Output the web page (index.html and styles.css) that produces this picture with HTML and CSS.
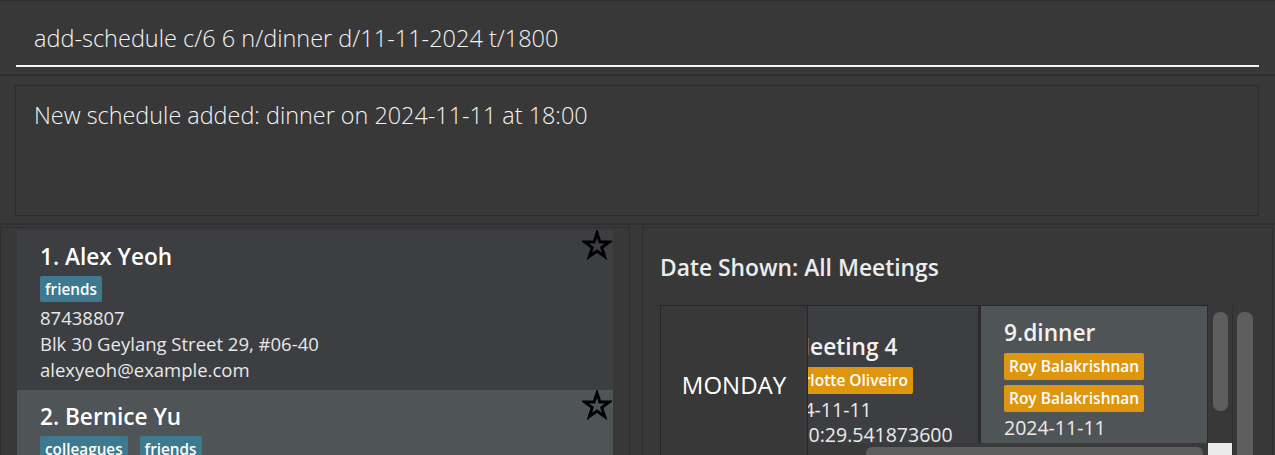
FILE: index.html
```html
<!DOCTYPE html>
<html lang="en">
<head>
<meta charset="utf-8">
<title>Address Book</title>
<link rel="stylesheet" href="styles.css">
</head>
<body>
<div class="app">
  <div class="command-bar">
    <div class="command-field">add-schedule c/6 6 n/dinner d/11-11-2024 t/1800</div>
  </div>
  <div class="result-bar">
    <div class="result-box">New schedule added: dinner on 2024-11-11 at 18:00</div>
  </div>
  <div class="main">
    <div class="panel left-panel">
      <div class="person-list">
        <div class="person-card">
          <div class="person-name">1. Alex Yeoh</div>
          <div class="tags"><span class="tag">friends</span></div>
          <div class="person-line">87438807</div>
          <div class="person-line">Blk 30 Geylang Street 29, #06-40</div>
          <div class="person-line">alexyeoh@example.com</div>
          <svg class="star" viewBox="0 0 30 30" width="30" height="30"><polygon points="15,3 17.92,11.98 27.36,11.98 19.73,17.54 22.64,26.52 15,20.97 7.36,26.52 10.27,17.54 2.64,11.98 12.08,11.98" fill="none" stroke="#000" stroke-width="2.9" stroke-linejoin="miter"/></svg>
        </div>
        <div class="person-card selected">
          <div class="person-name">2. Bernice Yu</div>
          <div class="tags"><span class="tag">colleagues</span><span class="tag">friends</span></div>
          <div class="person-line">99272758</div>
          <div class="person-line">Blk 30 Lorong 3 Serangoon Gardens, #07-18</div>
          <svg class="star" viewBox="0 0 30 30" width="30" height="30"><polygon points="15,3 17.92,11.98 27.36,11.98 19.73,17.54 22.64,26.52 15,20.97 7.36,26.52 10.27,17.54 2.64,11.98 12.08,11.98" fill="none" stroke="#000" stroke-width="2.9" stroke-linejoin="miter"/></svg>
        </div>
      </div>
    </div>
    <div class="panel right-panel">
      <div class="date-title">Date Shown: All Meetings</div>
      <div class="calendar-area">
        <div class="calendar">
          <div class="day-cell">MONDAY</div>
          <div class="meetings-view">
            <div class="meetings-track">
              <div class="meeting-card">
                <div class="meeting-name">8.Meeting 4</div>
                <div class="meeting-tags"><span class="mtag">Charlotte Oliveiro</span></div>
                <div class="meeting-line">2024-11-11</div>
                <div class="meeting-line">14:10:29.541873600</div>
              </div>
              <div class="meeting-card current">
                <div class="meeting-name">9.dinner</div>
                <div class="meeting-tags"><span class="mtag">Roy Balakrishnan</span><span class="mtag">Roy Balakrishnan</span></div>
                <div class="meeting-line">2024-11-11</div>
                <div class="meeting-line">18:00</div>
              </div>
            </div>
            <div class="hscroll"><div class="hthumb"></div></div>
          </div>
        </div>
        <div class="vscroll inner">
          <div class="vtrack"><div class="vthumb short"></div></div>
          <div class="corner"></div>
        </div>
        <div class="vscroll outer">
          <div class="vtrack"><div class="vthumb long"></div></div>
        </div>
      </div>
    </div>
  </div>
</div>
</body>
</html>
```
FILE: styles.css
```css
* {
  box-sizing: border-box;
  margin: 0;
  padding: 0;
}

body {
  margin: 0;
  width: 1275px;
  height: 455px;
  overflow: hidden;
  background: #383838;
  font-family: "Open Sans", "Noto Sans", sans-serif;
  color: #ffffff;
}

.app {
  display: flex;
  flex-direction: column;
  height: 455px;
  border-top: 1px solid #2e2e2e;
}

/* command box */
.command-bar {
  height: 75px;
  flex: none;
  border-bottom: 2px solid #2f2f2f;
  padding: 18px 16px 0 16px;
}

.command-field {
  height: 48px;
  padding: 4px 0 0 18px;
  font-size: 23.5px;
  font-weight: 300;
  line-height: 30px;
  color: #f4f4f4;
  border-bottom: 2px solid #f2f2f2;
  white-space: nowrap;
}

/* result box */
.result-bar {
  height: 149px;
  flex: none;
  border-bottom: 2px solid #2f2f2f;
  padding: 9px 16px 0 15px;
}

.result-box {
  height: 131px;
  border: 1px solid #2c2c2c;
  padding: 14px 0 0 18px;
  font-size: 23.4px;
  font-weight: 300;
  line-height: 30px;
  color: #f4f4f4;
}

/* main area */
.main {
  flex: 1;
  display: flex;
  gap: 12px;
  padding: 2px 2px 0 0;
  overflow: hidden;
}

.panel {
  border: 1px solid #2f2f2f;
  border-bottom: none;
}

.left-panel {
  width: 630px;
  flex: none;
  padding: 2px 16px 0 16px;
  overflow: hidden;
}

.person-card {
  position: relative;
  background: #3c3e41;
  padding: 11px 0 7px 23px;
}

.person-card.selected {
  background: #4f5457;
}

.person-name {
  font-size: 22.6px;
  font-weight: 600;
  line-height: 31px;
  color: #ffffff;
}

.tags {
  display: flex;
  gap: 12px;
  margin-top: 4px;
  margin-bottom: 3px;
}

.tag {
  display: inline-block;
  background: #3e7a8f;
  color: #ffffff;
  font-size: 15.3px;
  font-weight: 600;
  line-height: 26px;
  padding: 0 5px;
  border-radius: 2px;
}

.person-line {
  font-size: 18.5px;
  font-weight: 400;
  line-height: 26px;
  color: #e8e8e8;
}

.star {
  position: absolute;
  top: 0;
  right: 1px;
}

/* right panel */
.right-panel {
  flex: 1;
  padding: 0 0 0 17px;
  overflow: hidden;
}

.date-title {
  margin-top: 25px;
  font-size: 22.8px;
  font-weight: 600;
  line-height: 30px;
  color: #ececec;
  margin-bottom: 22px;
  white-space: nowrap;
}

.calendar-area {
  display: flex;
  align-items: stretch;
  height: 150px;
}

.calendar {
  width: 548px;
  flex: none;
  display: flex;
  border-top: 1px solid #262626;
  border-left: 1px solid #262626;
}

.day-cell {
  width: 147px;
  flex: none;
  border-right: 1px solid #262626;
  background: #383838;
  font-size: 24px;
  font-weight: 400;
  color: #ffffff;
  display: flex;
  justify-content: center;
  padding-top: 64px;
  line-height: 30px;
}

.meetings-view {
  flex: 1;
  display: flex;
  flex-direction: column;
  background: #3c3e41;
  overflow: hidden;
}

.meetings-track {
  height: 137px;
  flex: none;
  display: flex;
  gap: 2px;
  overflow: hidden;
  background: #2a2a2a;
}

.meeting-card {
  flex: none;
  width: 232px;
  height: 170px;
  margin-left: -62px;
  padding: 0 0 4px 24px;
  background: #3c3e41;
  display: flex;
  flex-direction: column;
  justify-content: center;
}

.meeting-card.current {
  width: 228px;
  margin-left: 0;
  padding: 0 0 0 23px;
  background: #4f5457;
  border-left: 1px solid #2a2a2a;
  border-right: 1px solid #2a2a2a;
}

.meeting-name {
  font-size: 22.7px;
  font-weight: 600;
  line-height: 31px;
  color: #f2f2f2;
  white-space: nowrap;
}

.meeting-tags {
  display: flex;
  flex-direction: column;
  align-items: flex-start;
  gap: 5px;
  margin-top: 5px;
  margin-bottom: 3px;
}

.mtag {
  display: inline-block;
  background: #df960f;
  color: #ffffff;
  font-size: 15.5px;
  font-weight: 600;
  line-height: 27px;
  padding: 0 5px;
  border-radius: 2px;
  white-space: nowrap;
}

.meeting-line {
  font-size: 19.5px;
  line-height: 25px;
  color: #ebebeb;
  white-space: nowrap;
}

.hscroll {
  height: 12px;
  flex: none;
  background: #3a3a3a;
  padding: 4px 5px 0 58px;
}

.hthumb {
  height: 12px;
  background: #5d5d5d;
  border-radius: 6px;
}

.vscroll {
  width: 25px;
  flex: none;
  display: flex;
  flex-direction: column;
}

.vscroll.inner {
  border-right: 1px solid #2e2e2e;
}

.vtrack {
  flex: 1;
  padding: 7px 4px 0 5px;
}

.vscroll.outer .vtrack {
  padding: 7px 4px 0 4px;
}

.vthumb {
  background: #5e5e5e;
  border-radius: 7px;
}

.vthumb.short {
  width: 15px;
  height: 99px;
}

.vthumb.long {
  width: 16px;
  height: 200px;
}

.corner {
  height: 12px;
  flex: none;
  background: #ebebeb;
}
```
